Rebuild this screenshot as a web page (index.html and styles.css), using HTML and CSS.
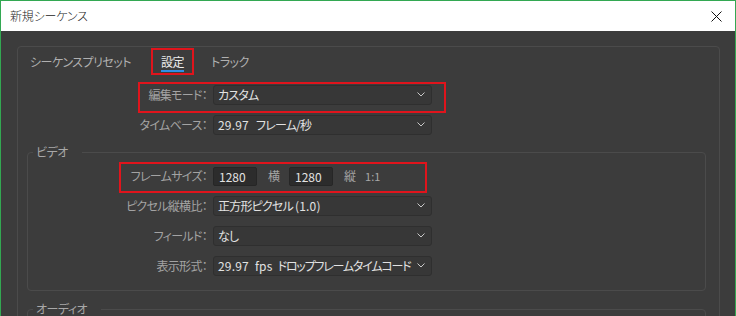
FILE: index.html
```html
<!DOCTYPE html>
<html lang="ja">
<head>
<meta charset="utf-8">
<title>新規シーケンス</title>
<link rel="stylesheet" href="styles.css">
</head>
<body>
<div class="window">
  <div class="titlebar">
    <span class="title">新規シーケンス</span>
    <span class="close" aria-label="閉じる">
      <svg width="11" height="11" viewBox="0 0 11 11"><path d="M0.5 0.5 L10.5 10.5 M10.5 0.5 L0.5 10.5" stroke="#111" stroke-width="1" fill="none"/></svg>
    </span>
  </div>
  <div class="content">
    <div class="panel">
      <div class="tabs">
        <div class="tab tab-first">シーケンスプリセット</div>
        <div class="tab tab-active"><span class="tab-label">設定</span></div>
        <div class="tab tab-last">トラック</div>
      </div>

      <div class="row row-top mark mark-edit">
        <span class="lbl lbl-panel">編集モード：</span>
        <div class="sel"><span class="val">カスタム</span><svg class="chev" width="8" height="5" viewBox="0 0 8 5"><polyline points="0.5,0.5 4,4 7.5,0.5" fill="none" stroke="#c8c8c8" stroke-width="1"/></svg></div>
      </div>
      <div class="row">
        <span class="lbl lbl-panel">タイムベース：</span>
        <div class="sel"><span class="val"><span class="n">29.97</span><span class="sp"></span>フレーム/秒</span><svg class="chev" width="8" height="5" viewBox="0 0 8 5"><polyline points="0.5,0.5 4,4 7.5,0.5" fill="none" stroke="#c8c8c8" stroke-width="1"/></svg></div>
      </div>

      <fieldset class="group group-video">
        <legend>ビデオ</legend>
        <div class="row row-first mark mark-frame">
          <span class="lbl lbl-group">フレームサイズ：</span>
          <div class="num">1280</div>
          <span class="unit">横</span>
          <div class="num">1280</div>
          <span class="unit">縦</span>
          <span class="ratio">1:1</span>
        </div>
        <div class="row">
          <span class="lbl lbl-group">ピクセル縦横比：</span>
          <div class="sel"><span class="val">正方形ピクセル <span class="n">(1.0)</span></span><svg class="chev" width="8" height="5" viewBox="0 0 8 5"><polyline points="0.5,0.5 4,4 7.5,0.5" fill="none" stroke="#c8c8c8" stroke-width="1"/></svg></div>
        </div>
        <div class="row">
          <span class="lbl lbl-group">フィールド：</span>
          <div class="sel"><span class="val">なし</span><svg class="chev" width="8" height="5" viewBox="0 0 8 5"><polyline points="0.5,0.5 4,4 7.5,0.5" fill="none" stroke="#c8c8c8" stroke-width="1"/></svg></div>
        </div>
        <div class="row row-last">
          <span class="lbl lbl-group">表示形式：</span>
          <div class="sel"><span class="val"><span class="n">29.97</span><span class="sp2"></span><span class="n">fps</span><span class="sp3"></span><span class="tight">ドロップフレームタイムコード</span></span><svg class="chev" width="8" height="5" viewBox="0 0 8 5"><polyline points="0.5,0.5 4,4 7.5,0.5" fill="none" stroke="#c8c8c8" stroke-width="1"/></svg></div>
        </div>
      </fieldset>

      <fieldset class="group group-audio">
        <legend>オーディオ</legend>
      </fieldset>
    </div>
  </div>
</div>
</body>
</html>
```
FILE: styles.css
```css
* { box-sizing: border-box; }
html, body {
  margin: 0;
  padding: 0;
  width: 736px;
  height: 316px;
  overflow: hidden;
  background: #3c3c3c;
}
body {
  font-family: "Noto Sans CJK JP", "Noto Sans", sans-serif;
  font-size: 12px;
  font-feature-settings: "palt";
  line-height: 14px;
}
.window {
  width: 736px;
  height: 316px;
  border-top: 1px solid #33a852;
  border-left: 1px solid #33a852;
  border-right: 1px solid #33a852;
  display: flex;
  flex-direction: column;
  overflow: hidden;
}
.titlebar {
  height: 30px;
  flex: none;
  background: #ffffff;
  display: flex;
  align-items: center;
  justify-content: space-between;
  padding-left: 9px;
  padding-right: 13px;
}
.title {
  color: #1a1a1a;
  font-size: 12px;
  font-weight: 300;
  letter-spacing: -0.2px;
}
.close {
  display: flex;
  width: 11px;
  height: 11px;
}
.content {
  flex: 1;
  background: #3c3c3c;
  padding: 15px 0 0 16px;
  overflow: hidden;
}
.panel {
  width: 703px;
  height: 400px;
  border: 1px solid #4b4b4b;
  border-radius: 4px;
  padding-top: 1px;
}
.tabs {
  display: flex;
  height: 27px;
  align-items: flex-start;
}
.tab {
  color: #b0b0b0;
  padding-top: 7px;
  letter-spacing: -0.5px;
}
.tab-first { margin-left: 12px; }
.tab-active {
  margin-left: 20px;
  height: 27px;
  border: 2px solid #e0141c;
  padding: 5px 8px 0 8px;
  color: #ececec;
  letter-spacing: -0.5px;
}
.tab-label {
  display: block;
  padding-bottom: 1px;
  border-bottom: 2px solid #2e8fe6;
}
.tab-last { margin-left: 17px; }

.row {
  display: flex;
  align-items: center;
  height: 20px;
  margin-top: 10px;
  position: relative;
}
.row-top { margin-top: 10px; }
.lbl {
  flex: none;
  text-align: right;
  color: #a3a3a3;
  padding-right: 6px;
  letter-spacing: -0.7px;
  white-space: nowrap;
}
.lbl-panel { width: 195px; }
.lbl-group { width: 185px; }
.sel {
  flex: none;
  width: 219px;
  height: 20px;
  background: #373737;
  border: 1px solid #2f2f2f;
  border-radius: 3px;
  display: flex;
  align-items: center;
  justify-content: space-between;
  padding: 0 6px 0 4px;
}
.val {
  color: #e2e2e2;
  white-space: nowrap;
  letter-spacing: -0.8px;
}
.n { letter-spacing: 0.2px; }
.tight { letter-spacing: -1.2px; }
.sp { display: inline-block; width: 7px; }
.sp2 { display: inline-block; width: 6px; }
.sp3 { display: inline-block; width: 5px; }
.chev { flex: none; margin-top: -2px; margin-left: 3px; }

.group {
  margin: 10px 13px 0 9px;
  border: 1px solid #4b4b4b;
  border-radius: 4px;
  padding: 0 0 14px 0;
  min-width: 0;
}
.group legend {
  color: #a8a8a8;
  margin-left: 5px;
  padding: 0 14px 0 3px;
  line-height: 14px;
  letter-spacing: -0.5px;
}
.group-video .row-first { margin-top: 7px; }
.group-video .row:not(.row-first) { margin-top: 10px; }
.group-video .row-last { margin-top: 11px; }
.group-audio { margin-top: 11px; height: 60px; }

.num {
  flex: none;
  width: 44px;
  height: 19px;
  background: #2c2c2c;
  border: 1px solid #262626;
  border-radius: 2px;
  color: #e2e2e2;
  padding-left: 5px;
  line-height: 17px;
}
.unit {
  color: #a3a3a3;
  margin: 0 9px 0 11px;
}
.ratio {
  color: #a8a8a8;
  font-size: 11px;
}

.mark::after {
  content: "";
  position: absolute;
  border: 2px solid #e0141c;
  pointer-events: none;
}
.mark-edit::after {
  left: 120px;
  top: -3px;
  width: 304px;
  height: 27px;
}
.mark-frame::after {
  left: 91px;
  top: -4px;
  width: 304px;
  height: 27px;
}
```
